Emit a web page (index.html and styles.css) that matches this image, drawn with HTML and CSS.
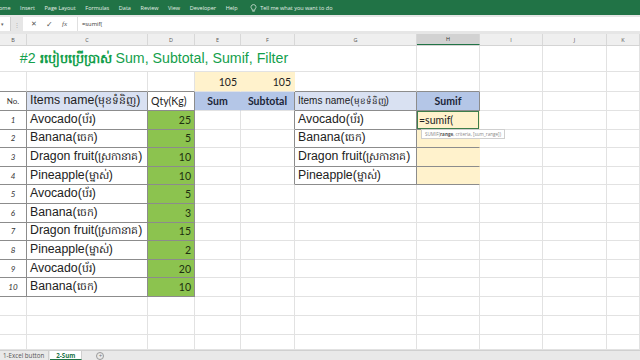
FILE: index.html
```html
<!DOCTYPE html>
<html>
<head>
<meta charset="utf-8">
<link rel="stylesheet" href="styles.css">
</head>
<body>
<div class="app">
  <div class="ribbon">
    <span>ome</span><span>Insert</span><span>Page Layout</span><span>Formulas</span><span>Data</span><span>Review</span><span>View</span><span>Developer</span><span>Help</span>
    <span class="tell"><svg width="7" height="8" viewBox="0 0 7 8"><path d="M3.5 0.6a2.4 2.4 0 0 0-1.4 4.4v1.2h2.8V5a2.4 2.4 0 0 0-1.4-4.4z M2.3 7.2h2.4" fill="none" stroke="#e8f0ea" stroke-width="0.7"/></svg>Tell me what you want to do</span>
  </div>
  <div class="fbar">
    <div class="namebox">▾</div>
    <div class="dots">⋮</div>
    <div class="fbtns"><span class="x">✕</span><span class="ok">✓</span><span class="fx">fx</span></div>
    <div class="formula">=sumif(</div>
  </div>
  <div class="colheads">
    <div>B</div><div>C</div><div>D</div><div>E</div><div>F</div><div>G</div><div class="sel">H</div><div>I</div><div>J</div><div>K</div>
  </div>
  <div class="sheet">
    <!-- title row -->
    <div class="c title"><span class="tt">#2 <span class="kh">របៀបប្រើប្រាស់</span> Sum, Subtotal, Sumif, Filter</span></div>
    <div class="c"></div><div class="c"></div><div class="c"></div><div class="c"></div><div class="c"></div>
    <!-- 105 row -->
    <div class="c bB"></div><div class="c bB"></div><div class="c bB"></div>
    <div class="c yel num">105</div><div class="c yel num">105</div>
    <div class="c bB"></div><div class="c bB"></div><div class="c"></div><div class="c"></div><div class="c"></div>
    <!-- header row -->
    <div class="c bR bB no">No.</div>
    <div class="c bR bB lblue item"><span>Items name(<span class="k">មុខទំនិញ</span>)</span></div>
    <div class="c bR bB qty">Qty(Kg)</div>
    <div class="c blue hb">Sum</div>
    <div class="c blue hb bR">Subtotal</div>
    <div class="c bR bB lblue item sm"><span>Items name(<span class="k">មុខទំនិញ</span>)</span></div>
    <div class="c bR bB blue hb">Sumif</div>
    <div class="c"></div><div class="c"></div><div class="c"></div>
    <!-- 1 -->
    <div class="c bR bB idx">1</div><div class="c bR bB item"><span>Avocado(<span class="k">ប័រ</span>)</span></div><div class="c bR bB green num">25</div>
    <div class="c"></div><div class="c bR"></div>
    <div class="c bR bB item"><span>Avocado(<span class="k">ប័រ</span>)</span></div><div class="c bR bB yel edit">=sumif(<div class="tip">SUMIF(<b>range</b>, criteria, [sum_range])</div></div>
    <div class="c"></div><div class="c"></div><div class="c"></div>
    <!-- 2 -->
    <div class="c bR bB idx">2</div><div class="c bR bB item"><span>Banana(<span class="k">ចេក</span>)</span></div><div class="c bR bB green num">5</div>
    <div class="c"></div><div class="c bR"></div>
    <div class="c bR bB item"><span>Banana(<span class="k">ចេក</span>)</span></div><div class="c bR bB yel"></div>
    <div class="c"></div><div class="c"></div><div class="c"></div>
    <!-- 3 -->
    <div class="c bR bB idx">3</div><div class="c bR bB item"><span>Dragon fruit(<span class="k">ស្រកានាគ</span>)</span></div><div class="c bR bB green num">10</div>
    <div class="c"></div><div class="c bR"></div>
    <div class="c bR bB item"><span>Dragon fruit(<span class="k">ស្រកានាគ</span>)</span></div><div class="c bR bB yel"></div>
    <div class="c"></div><div class="c"></div><div class="c"></div>
    <!-- 4 -->
    <div class="c bR bB idx">4</div><div class="c bR bB item"><span>Pineapple(<span class="k">ម្នាស់</span>)</span></div><div class="c bR bB green num">10</div>
    <div class="c"></div><div class="c bR"></div>
    <div class="c bR bB item"><span>Pineapple(<span class="k">ម្នាស់</span>)</span></div><div class="c bR bB yel"></div>
    <div class="c"></div><div class="c"></div><div class="c"></div>
    <!-- 5 -->
    <div class="c bR bB idx">5</div><div class="c bR bB item"><span>Avocado(<span class="k">ប័រ</span>)</span></div><div class="c bR bB green num">5</div>
    <div class="c"></div><div class="c"></div><div class="c"></div><div class="c"></div><div class="c"></div><div class="c"></div><div class="c"></div>
    <!-- 6 -->
    <div class="c bR bB idx">6</div><div class="c bR bB item"><span>Banana(<span class="k">ចេក</span>)</span></div><div class="c bR bB green num">3</div>
    <div class="c"></div><div class="c"></div><div class="c"></div><div class="c"></div><div class="c"></div><div class="c"></div><div class="c"></div>
    <!-- 7 -->
    <div class="c bR bB idx">7</div><div class="c bR bB item"><span>Dragon fruit(<span class="k">ស្រកានាគ</span>)</span></div><div class="c bR bB green num">15</div>
    <div class="c"></div><div class="c"></div><div class="c"></div><div class="c"></div><div class="c"></div><div class="c"></div><div class="c"></div>
    <!-- 8 -->
    <div class="c bR bB idx">8</div><div class="c bR bB item"><span>Pineapple(<span class="k">ម្នាស់</span>)</span></div><div class="c bR bB green num">2</div>
    <div class="c"></div><div class="c"></div><div class="c"></div><div class="c"></div><div class="c"></div><div class="c"></div><div class="c"></div>
    <!-- 9 -->
    <div class="c bR bB idx">9</div><div class="c bR bB item"><span>Avocado(<span class="k">ប័រ</span>)</span></div><div class="c bR bB green num">20</div>
    <div class="c"></div><div class="c"></div><div class="c"></div><div class="c"></div><div class="c"></div><div class="c"></div><div class="c"></div>
    <!-- 10 -->
    <div class="c bR bB idx">10</div><div class="c bR bB item"><span>Banana(<span class="k">ចេក</span>)</span></div><div class="c bR bB green num">10</div>
    <div class="c"></div><div class="c"></div><div class="c"></div><div class="c"></div><div class="c"></div><div class="c"></div><div class="c"></div>
    <!-- empty rows -->
    <div class="c"></div><div class="c"></div><div class="c"></div><div class="c"></div><div class="c"></div><div class="c"></div><div class="c"></div><div class="c"></div><div class="c"></div><div class="c"></div>
    <div class="c"></div><div class="c"></div><div class="c"></div><div class="c"></div><div class="c"></div><div class="c"></div><div class="c"></div><div class="c"></div><div class="c"></div><div class="c"></div>
    <div class="c"></div><div class="c"></div><div class="c"></div><div class="c"></div><div class="c"></div><div class="c"></div><div class="c"></div><div class="c"></div><div class="c"></div><div class="c"></div>
  </div>
  <div class="tabs">
    <div class="tab">1-Excel button</div>
    <div class="tab active">2-Sum</div>
    <div class="add">+</div>
  </div>
</div>
</body>
</html>
```
FILE: styles.css
```css
* { box-sizing: border-box; }
html, body { margin: 0; padding: 0; }
body { width: 640px; height: 360px; overflow: hidden; background: #fff; font-family: "Liberation Sans", Arial, sans-serif; }
.app { display: flex; flex-direction: column; height: 360px; }

.ribbon {
  height: 15px; background: #217346; color: #e4efe7;
  font-family: "Open Sans", sans-serif; font-size: 5.5px;
  display: flex; align-items: center; gap: 9.6px; margin-left: -1px;
  white-space: nowrap;
}
.ribbon .tell { display: flex; align-items: center; gap: 3px; margin-left: 3px; }

.fbar {
  height: 19px; background: #e6e6e6; padding: 2px 0 3px 0;
  display: flex; align-items: stretch;
}
.namebox { width: 11px; background: #fff; font-size: 5px; color: #666; display: flex; align-items: center; justify-content: flex-start; padding-left: 1px; border-right: 1px solid #d0d0d0; }
.dots { width: 12px; color: #aaa; font-size: 6px; display: flex; align-items: center; justify-content: center; }
.fbtns { width: 55px; background: #fff; display: flex; align-items: center; gap: 9px; padding-left: 8px; color: #555; border-right: 1px solid #e0e0e0; }
.fbtns .x { font-size: 7px; }
.fbtns .ok { font-size: 8px; }
.fbtns .fx { font-family: "Liberation Serif", serif; font-style: italic; font-size: 7px; }
.formula { flex: 1; background: #fff; font-family: "Open Sans", sans-serif; font-size: 5.8px; color: #333; display: flex; align-items: center; padding-left: 4px; }

.colheads {
  height: 12px; display: grid;
  grid-template-columns: 27px 121px 47px 46px 54px 122px 63px 63px 64px 33px;
  background: #efefef; border-bottom: 1px solid #d4d4d4;
  font-family: "Open Sans", sans-serif; font-size: 5.5px; color: #555;
}
.colheads div { display: flex; align-items: center; justify-content: center; border-right: 1px solid #d8d8d8; }
.colheads .sel { background: #d2d2d2; border-bottom: 1px solid #217346; color: #333; }

.sheet {
  height: 304px; display: grid; position: relative;
  grid-template-columns: 27px 121px 47px 46px 54px 122px 63px 63px 64px 33px;
  grid-template-rows: 26px 20px 19px repeat(10, 18.6px) 19px 19px 1fr;
}
.c {
  border-right: 1px solid #e2e2e2; border-bottom: 1px solid #e2e2e2;
  display: flex; align-items: center; overflow: visible; white-space: nowrap;
  font-family: Lato, "Liberation Sans", sans-serif; font-size: 10.5px; color: #222;
  position: relative;
}
.bR { border-right-color: #8c8c8c; }
.bB { border-bottom-color: #8c8c8c; }

.title { grid-column: span 5; justify-content: center; font-family: "Liberation Sans", Arial, sans-serif; font-size: 14.2px; color: #14a04c; padding: 2px 0 0 13px; border-right: none; }
.title .kh { font-weight: bold; font-size: 0.9em; }

.k { font-size: 0.88em; }
.yel { background: #fff2cc; border-right-color: #fff2cc; }
.num { justify-content: flex-end; padding-right: 3px; }
.green { background: #8cc34f; color: #1d2f10; }
.no { justify-content: center; font-size: 8px; color: #333; }
.idx { justify-content: center; font-style: italic; font-size: 8px; color: #333; }
.item { font-family: "Liberation Sans", Arial, sans-serif; font-size: 12.3px; padding-left: 3px; color: #222; }
.item.sm { font-size: 10px; }
.lblue { background: #d9e1f2; }
.blue { background: #b4c6e7; border-right-color: #b4c6e7; }
.blue.bR { border-right-color: #8c8c8c; }
.hb { justify-content: center; font-weight: bold; font-size: 10.5px; color: #1b2538; }
.qty { padding-left: 3px; font-size: 10.5px; }
.edit { box-shadow: inset 0 0 0 1px #3e7d4b; padding-left: 2px; font-size: 10.5px; }
.tip {
  position: absolute; left: 4px; top: 18px; z-index: 2;
  background: #fff; border: 1px solid #cfcfcf; padding: 1px 3px;
  font-family: "Open Sans", sans-serif; font-size: 4.6px; color: #888; line-height: 6px;
}
.tip b { color: #555; }

.tabs {
  height: 10px; background: #e9e9e9; border-top: 1px solid #d0d0d0;
  display: flex; align-items: stretch; font-family: "Open Sans", sans-serif; font-size: 6.2px; color: #555;
}
.tab { display: flex; align-items: center; padding: 0 4px; border-right: 1px solid #cfcfcf; }
.tab:first-child { padding-left: 3px; }
.tab.active { background: #fff; color: #217346; font-weight: bold; border-bottom: 1px solid #217346; margin-left: 1px; padding: 0 6px; }
.add { width: 8px; height: 8px; margin: 1px 0 0 14px; border: 1px solid #999; border-radius: 50%; display: flex; align-items: center; justify-content: center; font-size: 6px; color: #777; line-height: 1; }
```
